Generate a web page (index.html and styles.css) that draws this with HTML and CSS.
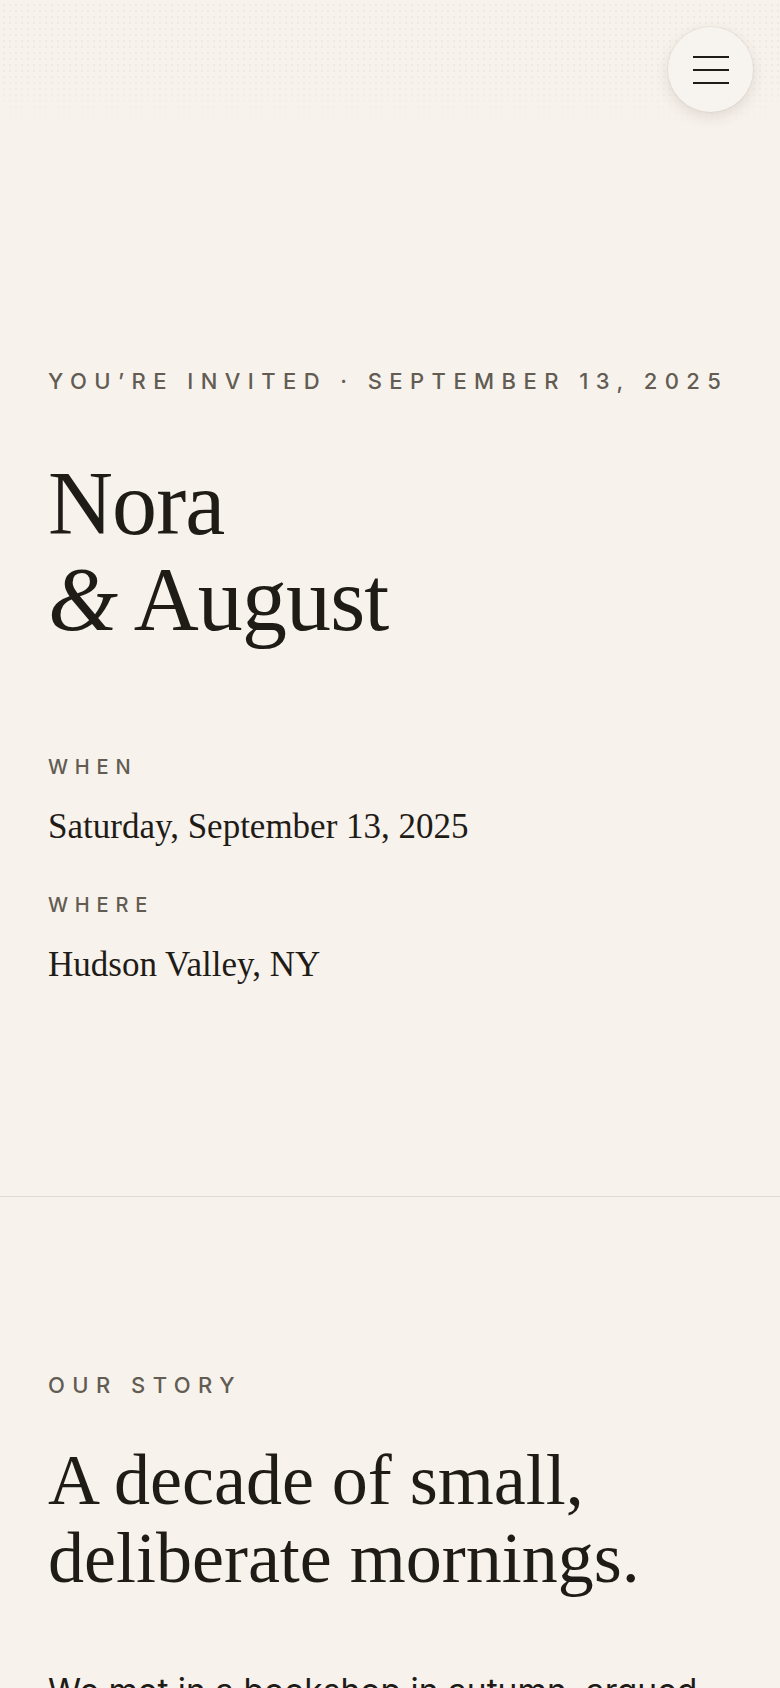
FILE: index.html
```html
<!DOCTYPE html>
<html lang="en">
<head>
<meta charset="utf-8">
<meta name="viewport" content="width=device-width, initial-scale=1">
<title>Nora &amp; August</title>
<link rel="stylesheet" href="styles.css">
</head>
<body>
<header class="topbar">
  <div class="topbar-dots"></div>
  <button class="menu-btn" aria-label="Open menu">
    <span class="menu-line"></span>
    <span class="menu-line"></span>
    <span class="menu-line"></span>
  </button>
</header>
<main>
  <section class="hero">
    <p class="eyebrow">You’re invited · September 13, 2025</p>
    <h1 class="names">Nora<br><span class="amp">&amp;</span> August</h1>
    <dl class="details">
      <div class="detail">
        <dt class="label">When</dt>
        <dd class="value">Saturday, September 13, 2025</dd>
      </div>
      <div class="detail">
        <dt class="label">Where</dt>
        <dd class="value">Hudson Valley, NY</dd>
      </div>
    </dl>
  </section>
  <section class="story">
    <p class="eyebrow">Our story</p>
    <h2 class="story-title">A decade of small,<br>deliberate mornings.</h2>
    <p class="story-text">We met in a bookshop in autumn, argued about a novel neither of us had finished, and have been reading over each other’s shoulders ever since.</p>
  </section>
</main>
</body>
</html>
```

FILE: styles.css
```css
* { box-sizing: border-box; }

html, body {
  margin: 0;
  padding: 0;
}

body {
  background: #f7f2ec;
  color: #1f1c18;
  font-family: Inter, "Liberation Sans", sans-serif;
  overflow-x: hidden;
}

.topbar {
  position: absolute;
  top: 0;
  left: 0;
  right: 0;
  height: 130px;
  z-index: 10;
}

.topbar-dots {
  position: absolute;
  inset: 0;
  background-image: radial-gradient(circle, rgba(150, 130, 105, 0.08) 0.9px, transparent 1.3px);
  background-size: 6px 6px;
  background-position: 1px 2px;
  -webkit-mask-image: linear-gradient(to bottom, #000 50%, transparent 100%);
  mask-image: linear-gradient(to bottom, #000 50%, transparent 100%);
}

.menu-btn {
  position: absolute;
  top: 27px;
  right: 27px;
  width: 85px;
  height: 85px;
  border-radius: 50%;
  border: none;
  padding: 0;
  background: #f7f3ee;
  box-shadow: 0 5px 14px rgba(70, 50, 30, 0.12), 0 0 0 1px rgba(120, 100, 80, 0.06);
  display: flex;
  flex-direction: column;
  align-items: center;
  justify-content: center;
  gap: 11px;
  cursor: pointer;
}

.menu-line {
  display: block;
  width: 36px;
  height: 2px;
  background: #1f1c18;
}

.hero {
  padding: 370px 48px 210px;
  border-bottom: 1px solid #e1dad2;
}

.eyebrow {
  margin: 0;
  font-family: Inter, "Liberation Sans", sans-serif;
  font-size: 22px;
  line-height: 22px;
  letter-spacing: 0.338em;
  text-transform: uppercase;
  color: #625c53;
  font-weight: 500;
  white-space: nowrap;
}

.names {
  margin: 64px 0 0;
  font-family: "Liberation Serif", serif;
  font-weight: 400;
  font-size: 90px;
  line-height: 96px;
  letter-spacing: -0.01em;
  color: #1f1c18;
}

.amp {
  font-style: italic;
}

.details {
  margin: 109px 0 0;
  display: flex;
  flex-direction: column;
  gap: 47px;
}

.detail {
  display: flex;
  flex-direction: column;
  gap: 29px;
}

.label {
  margin: 0;
  font-family: Inter, "Liberation Sans", sans-serif;
  font-size: 20px;
  line-height: 20px;
  letter-spacing: 0.34em;
  text-transform: uppercase;
  color: #625c53;
  font-weight: 500;
}

.value {
  margin: 0;
  font-family: "Liberation Serif", serif;
  font-size: 35px;
  line-height: 42px;
  color: #1f1c18;
}

.story {
  padding: 177px 48px 80px;
}

.story-title {
  margin: 45px 0 0;
  font-family: "Liberation Serif", serif;
  font-weight: 400;
  font-size: 72px;
  line-height: 78px;
  letter-spacing: 0;
  color: #1f1c18;
}

.story-text {
  margin: 67px 0 0;
  font-family: Inter, "Liberation Sans", sans-serif;
  font-size: 33.6px;
  line-height: 1.6;
  color: #1f1c18;
  max-width: 700px;
}
```
